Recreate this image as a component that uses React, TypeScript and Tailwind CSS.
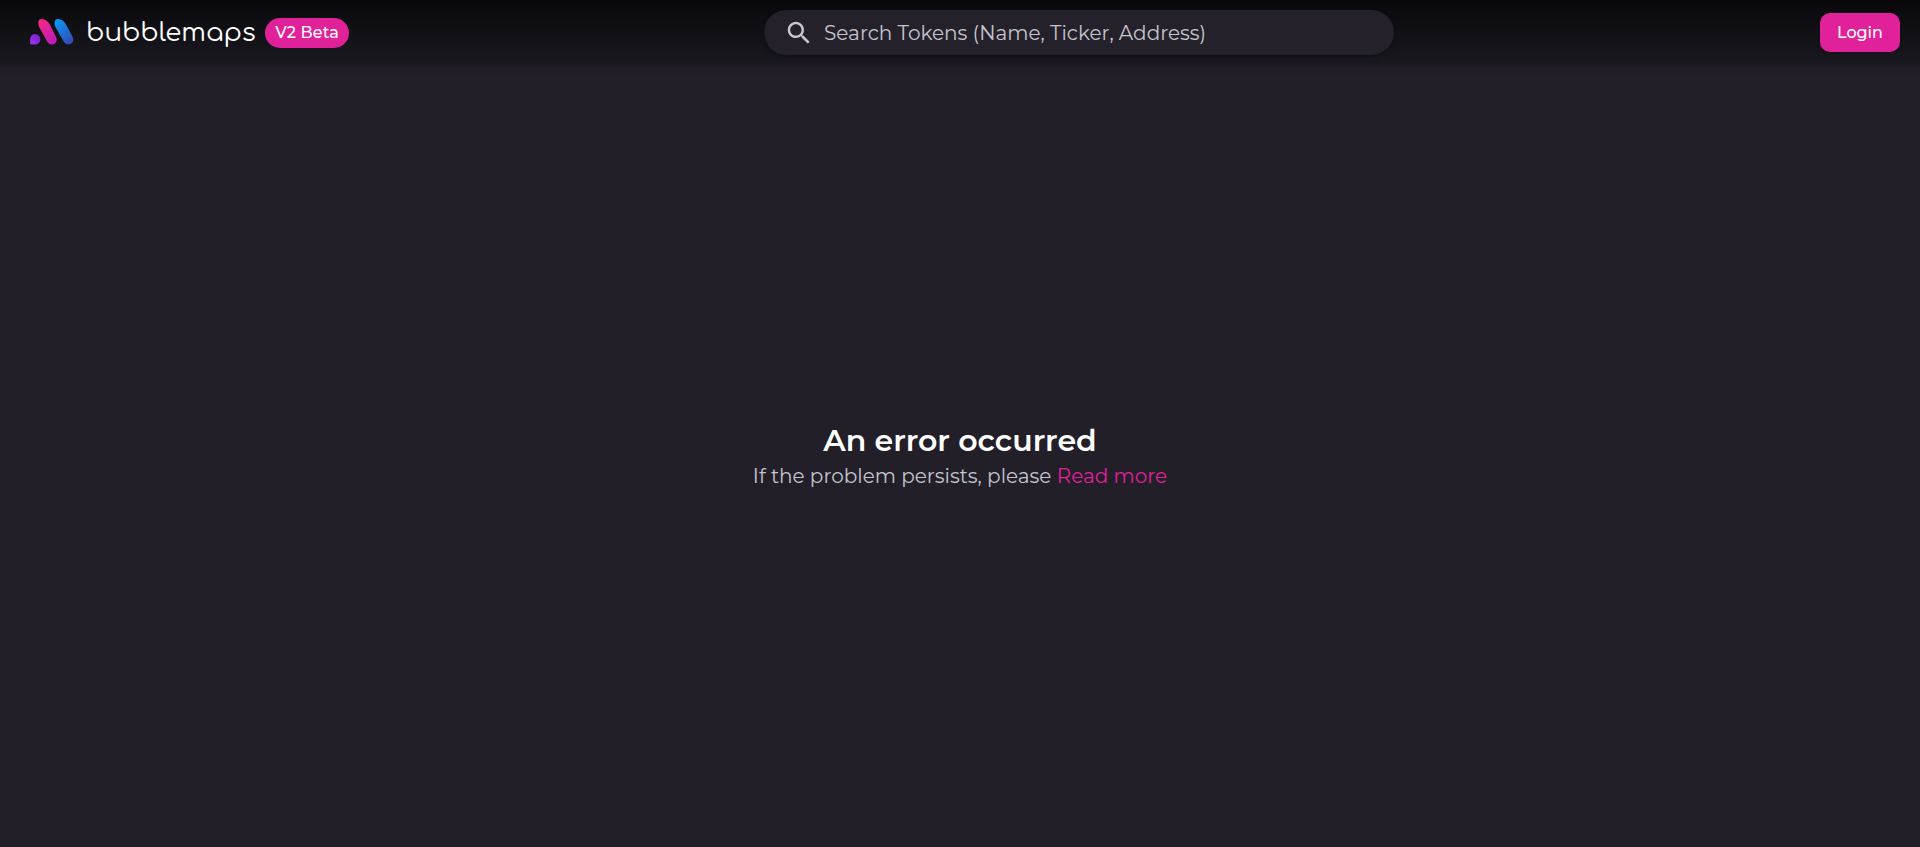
function Logo() {
  return (
    <svg width="44" height="27" viewBox="0 0 44 27" className="block shrink-0" aria-hidden="true">
      <defs>
        <linearGradient id="violet" x1="1" y1="0" x2="0" y2="1">
          <stop offset="0" stopColor="#6a1fc4" />
          <stop offset="1" stopColor="#a832f5" />
        </linearGradient>
        <linearGradient id="pink" x1="0" y1="0" x2="0.6" y2="1">
          <stop offset="0" stopColor="#fb2a80" />
          <stop offset="1" stopColor="#c01cb4" />
        </linearGradient>
        <linearGradient id="blue" x1="0" y1="0" x2="0.6" y2="1">
          <stop offset="0" stopColor="#069dfb" />
          <stop offset="1" stopColor="#2f52b8" />
        </linearGradient>
      </defs>
      <path d="M5.2 15A5.1 5.1 0 0 1 5.2 25.4H1.3Q.2 25.4 .2 24.2V20A5 5 0 0 1 5.2 15Z" fill="url(#violet)" />
      <path d="M11.5 0C15 0 18 2.3 19.8 5.4L25.7 17.2C28 21.5 26 25.4 22 25.4C19.4 25.4 17.9 24 16.6 21.5L9.4 8.4C8.5 6.5 8.2 5 8.4 3C8.6 1 9.6 0 11.5 0Z" fill="url(#pink)" />
      <path d="M28 0C31.5 0 34.2 2.3 36 5.4L42.3 17.2C44.6 21.5 42.5 25.4 38.5 25.4C35.9 25.4 34.4 24 33.1 21.5L25.7 8.4C24.8 6.5 24.4 5 24.6 3C24.8 1 26 0 28 0Z" fill="url(#blue)" />
    </svg>
  );
}

export default function App() {
  return (
    <div className="flex h-[847px] w-full flex-col overflow-hidden bg-[#221f29] font-['Montserrat','Inter',sans-serif]">
      <header className="z-10 grid h-[65px] shrink-0 grid-cols-[764px_630px_1fr] bg-linear-to-b from-[#09090c] to-[#1a1920] shadow-[0_2px_5px_rgba(26,25,32,0.9)]">
        <div className="flex h-[65px] items-center pl-[30px]">
          <Logo />
          <span className="ml-[12px] w-[169px] whitespace-nowrap font-['Comfortaa','Quicksand','Montserrat',sans-serif] text-[26px] leading-[34px] text-white">
            bubblemaps
          </span>
          <span className="ml-[10px] flex h-[30px] w-[84px] items-center justify-center rounded-full bg-[#e0219a] text-base font-medium tracking-[0.15px] whitespace-nowrap text-white">
            V2 Beta
          </span>
        </div>
        <div className="mt-[10px] flex h-[45px] items-center rounded-full bg-[#24212b] pl-[20px] shadow-[0_2px_4px_rgba(0,0,0,0.35)]">
          <svg width="30" height="30" viewBox="0 0 24 24" className="block shrink-0 fill-[#c6c7d0]" aria-hidden="true">
            <path d="M15.5 14h-.79l-.28-.27C15.41 12.59 16 11.11 16 9.5 16 5.91 13.09 3 9.5 3S3 5.91 3 9.5 5.91 16 9.5 16c1.61 0 3.09-.59 4.23-1.57l.27.28v.79l5 4.99L20.49 19l-4.99-5zm-6 0C7.01 14 5 11.99 5 9.5S7.01 5 9.5 5 14 7.01 14 9.5 11.99 14 9.5 14z" />
          </svg>
          <span className="ml-[10px] pt-px text-[20px] leading-[30px] whitespace-nowrap text-[#c4c5ce]">
            Search Tokens (Name, Ticker, Address)
          </span>
        </div>
        <div className="flex h-[65px] items-center justify-end pr-5">
          <button className="h-[39px] w-[80px] rounded-[10px] bg-[#e0219a] text-base font-medium text-white shadow-[0_1px_3px_rgba(0,0,0,0.4)]">
            Login
          </button>
        </div>
      </header>
      <main className="flex flex-1 flex-col items-center pt-[358px] whitespace-nowrap">
        <h1 className="text-[30px] leading-[36px] font-semibold text-white">An error occurred</h1>
        <p className="text-[20px] leading-[35px] text-[#c4c5ce]">
          If the problem persists, please <a className="text-[#e0219a]">Read more</a>
        </p>
      </main>
    </div>
  );
}
